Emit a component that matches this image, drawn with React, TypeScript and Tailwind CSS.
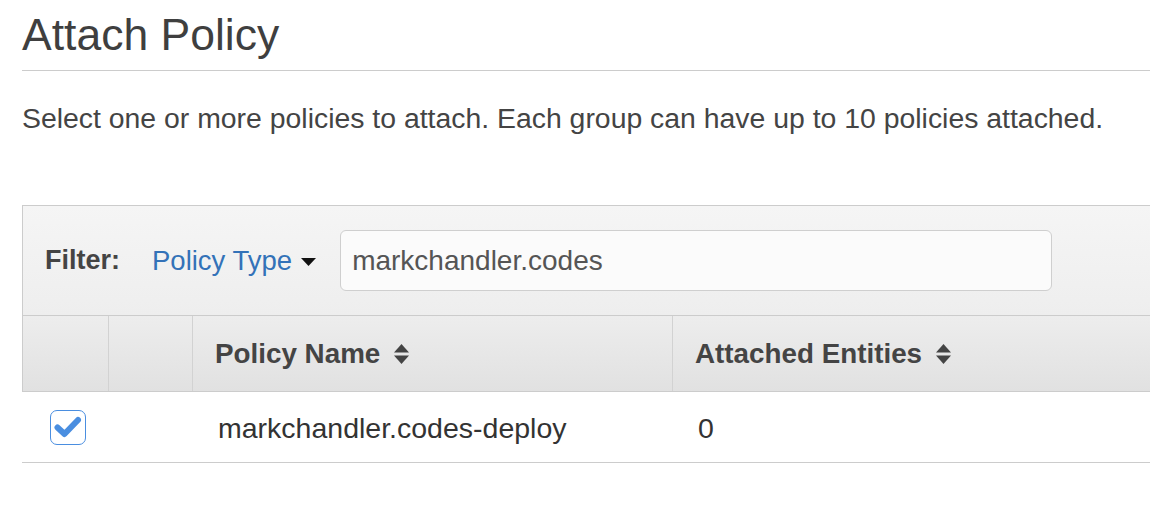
const font = { fontFamily: '"Liberation Sans", Arial, sans-serif' };

const SortIcon = () => (
  <svg width="17" height="22" viewBox="0 0 17 22" className="ml-[13px]">
    <path d="M8.5 1 L16 9.5 H1 Z" fill="#444" />
    <path d="M1 12.5 H16 L8.5 21 Z" fill="#444" />
  </svg>
);

const Caret = () => (
  <svg width="15" height="8" viewBox="0 0 15 8" className="ml-[9px] mt-[2px]">
    <path d="M0 0 H15 L7.5 8 Z" fill="#111" />
  </svg>
);

const Checkbox = () => (
  <div className="w-[36px] h-[35px] rounded-[7px] border-[1.5px] border-[#4a8ee0] bg-white flex items-center justify-center">
    <svg width="28" height="24" viewBox="0 0 28 24">
      <path
        d="M3.5 12.5 L10.5 19 L24 5"
        fill="none"
        stroke="#4a8ee0"
        strokeWidth="6"
        strokeLinecap="round"
        strokeLinejoin="round"
      />
    </svg>
  </div>
);

export default function App() {
  return (
    <div className="w-[1150px] h-[524px] overflow-hidden bg-white text-[#444]" style={font}>
      <div className="pl-[22px]">
        <div className="h-[71px] flex items-center border-b border-[#cccccc]">
          <h1 className="text-[44.5px] leading-none text-[#3f3f3f]">Attach Policy</h1>
        </div>
        <div className="h-[94px] flex items-center">
          <p className="text-[28.4px] leading-none">
            Select one or more policies to attach. Each group can have up to 10 policies attached.
          </p>
        </div>
        <div className="h-[40px]" />

        <div className="w-[1160px] border-t border-l border-[#cccccc]">
          <div className="h-[110px] flex items-center border-b border-[#cccccc] bg-linear-to-b from-[#f5f5f5] to-[#eeeeee] pl-[22px]">
            <span className="text-[27px] font-bold leading-none text-[#444]">Filter:</span>
            <span className="ml-[32px] flex items-center text-[27.5px] leading-none text-[#3372b8]">
              Policy Type
              <Caret />
            </span>
            <div className="ml-[24px] w-[712px] h-[61px] rounded-[6px] border-[1.5px] border-[#cfcfcf] bg-[#fbfbfb] flex items-center pl-[11px]">
              <span className="text-[28px] leading-none text-[#555]">markchandler.codes</span>
            </div>
          </div>

          <div className="h-[76px] flex border-b-[1.5px] border-[#cccccc] bg-linear-to-b from-[#ededed] to-[#e1e1e1]">
            <div className="w-[86px] border-r border-[#d2d2d2]" />
            <div className="w-[84px] border-r border-[#d2d2d2]" />
            <div className="w-[480px] border-r border-[#d2d2d2] flex items-center pl-[22px]">
              <span className="text-[27.8px] font-bold leading-none text-[#444]">Policy Name</span>
              <SortIcon />
            </div>
            <div className="flex-1 flex items-center pl-[22px]">
              <span className="text-[27.8px] font-bold leading-none text-[#444]">Attached Entities</span>
              <SortIcon />
            </div>
          </div>

          <div className="h-[71px] flex border-b-[1.5px] border-[#cccccc] bg-white -ml-px">
            <div className="w-[87px] flex items-center pl-[28px]">
              <Checkbox />
            </div>
            <div className="w-[84px]" />
            <div className="w-[480px] flex items-center pl-[25px] pt-[3px]">
              <span className="text-[28.5px] leading-none text-[#333]">markchandler.codes-deploy</span>
            </div>
            <div className="flex-1 flex items-center pl-[25px] pt-[3px]">
              <span className="text-[28.5px] leading-none text-[#333]">0</span>
            </div>
          </div>
        </div>
      </div>
    </div>
  );
}
